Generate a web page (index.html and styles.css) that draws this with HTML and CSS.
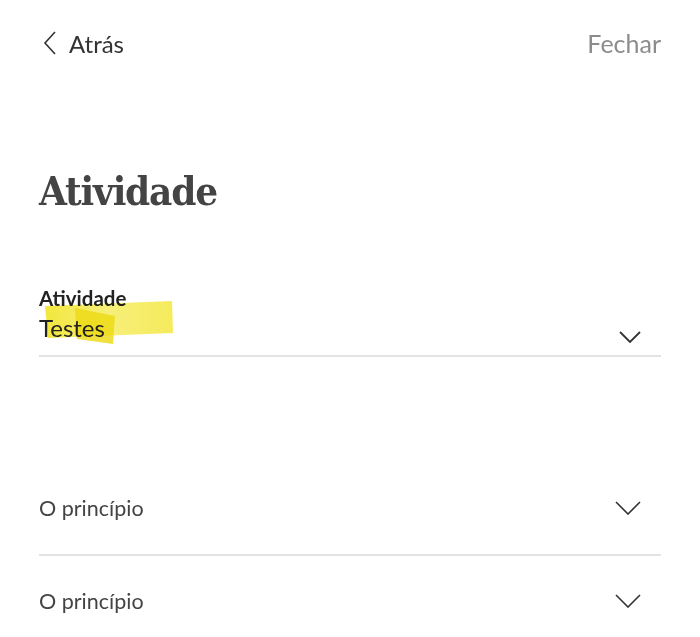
FILE: index.html
```html
<!DOCTYPE html>
<html lang="pt">
<head>
<meta charset="utf-8">
<link rel="stylesheet" href="styles.css">
</head>
<body>
<div class="page">
  <header class="topbar">
    <a class="back">
      <svg class="back-icon" viewBox="0 0 14 24" width="14" height="24"><path d="M12 1 L2 12 L12 23" fill="none" stroke="#333" stroke-width="1.6"/></svg>
      <span>Atrás</span>
    </a>
    <span class="close">Fechar</span>
  </header>

  <h1 class="title">Atividade</h1>

  <div class="field">
    <div class="field-text">
      <div class="field-label">Atividade</div>
      <div class="field-value">Testes</div>
    </div>
    <svg class="chev" viewBox="0 0 22 12" width="22" height="12"><path d="M1 1 L11 11 L21 1" fill="none" stroke="#333" stroke-width="1.8"/></svg>
    <svg class="highlight" viewBox="0 0 140 52" width="140" height="52">
      <defs>
        <linearGradient id="hl" x1="0" y1="0" x2="1" y2="0">
          <stop offset="0" stop-color="#f2e42a"/>
          <stop offset="0.5" stop-color="#f6ee6a"/>
          <stop offset="1" stop-color="#f4e94a"/>
        </linearGradient>
      </defs>
      <polygon points="6,9 133,4 134,36 9,41" fill="url(#hl)" opacity="0.9"/>
      <polygon points="36,11 76,19 74,47 38,42" fill="#ecd912" opacity="0.8"/>
    </svg>
  </div>

  <div class="rows">
    <div class="row">
      <span>O princípio</span>
      <svg class="chev2" viewBox="0 0 26 14" width="26" height="14"><path d="M1 1 L13 13 L25 1" fill="none" stroke="#333" stroke-width="1.6"/></svg>
    </div>
    <div class="row">
      <span>O princípio</span>
      <svg class="chev2" viewBox="0 0 26 14" width="26" height="14"><path d="M1 1 L13 13 L25 1" fill="none" stroke="#333" stroke-width="1.6"/></svg>
    </div>
  </div>
</div>
</body>
</html>
```
FILE: styles.css
```css
html, body {
  margin: 0;
  padding: 0;
  background: #fff;
}
body {
  font-family: "Lato", "Open Sans", sans-serif;
  color: #333;
}
.page {
  padding: 0 39px;
}
.topbar {
  display: flex;
  justify-content: space-between;
  align-items: center;
  height: 86px;
}
.back {
  display: flex;
  align-items: center;
  gap: 12px;
  font-size: 24px;
  color: #333;
  margin-left: 4px;
}
.back-icon {
  display: block;
}
.close {
  font-size: 25px;
  color: #8c8c8c;
}
.title {
  font-family: "DejaVu Serif", serif;
  font-stretch: condensed;
  font-weight: bold;
  font-size: 40px;
  letter-spacing: -1.2px;
  color: #444;
  margin: 83px 0 0;
  line-height: 44px;
}
.field {
  position: relative;
  display: flex;
  align-items: flex-end;
  justify-content: space-between;
  margin-top: 74px;
  padding-bottom: 12px;
  border-bottom: 2px solid #e3e3e3;
}
.field-label {
  font-size: 20.5px;
  font-weight: bold;
  color: #222;
  line-height: 22px;
}
.field-value {
  position: relative;
  z-index: 1;
  font-size: 24px;
  color: #222;
  line-height: 30px;
  margin-top: 4px;
}
.chev {
  margin-right: 20px;
  margin-bottom: 0;
}
.highlight {
  position: absolute;
  left: 0;
  top: 10px;
  mix-blend-mode: multiply;
  pointer-events: none;
}
.rows {
  margin-top: 105px;
}
.row {
  display: flex;
  align-items: center;
  justify-content: space-between;
  height: 92px;
  font-size: 21.5px;
  color: #444;
  border-bottom: 2px solid #e3e3e3;
}
.row + .row {
  height: 90px;
}
.row:last-child {
  border-bottom: none;
}
.chev2 {
  margin-right: 20px;
}
```
